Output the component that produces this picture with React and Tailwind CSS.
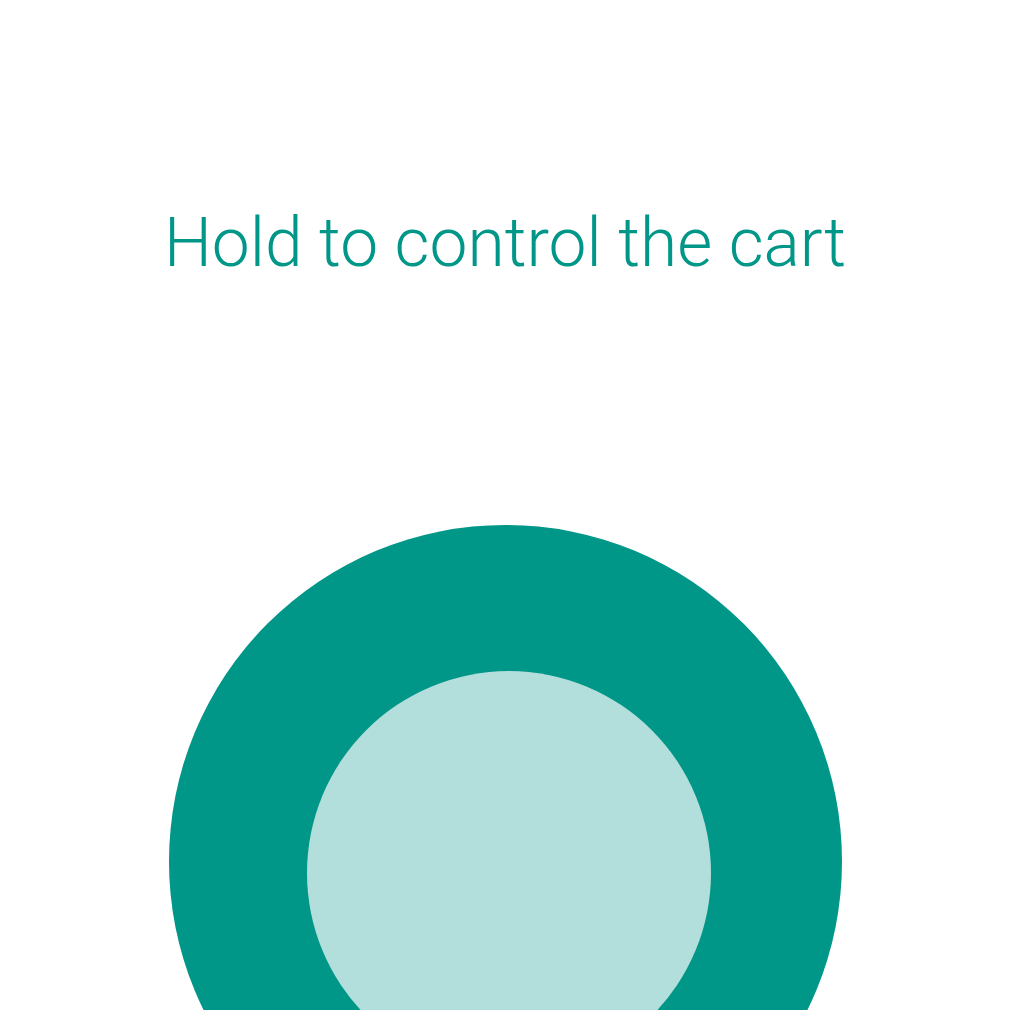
export default function App() {
  return (
    <div className="w-full h-[1010px] overflow-hidden bg-white flex flex-col items-center">
      <h1
        className="mt-[210px] text-[67.7px] leading-none font-light text-[#009688] whitespace-nowrap"
        style={{ fontFamily: 'Roboto, "Noto Sans", sans-serif' }}
      >
        Hold to control the cart
      </h1>
      <div className="mt-[247px] w-[673px] h-[673px] shrink-0 rounded-full bg-[#009688] pl-[138px] pt-[146px]">
        <div className="w-[404px] h-[404px] rounded-full bg-[#b2dfdb]" />
      </div>
    </div>
  );
}
